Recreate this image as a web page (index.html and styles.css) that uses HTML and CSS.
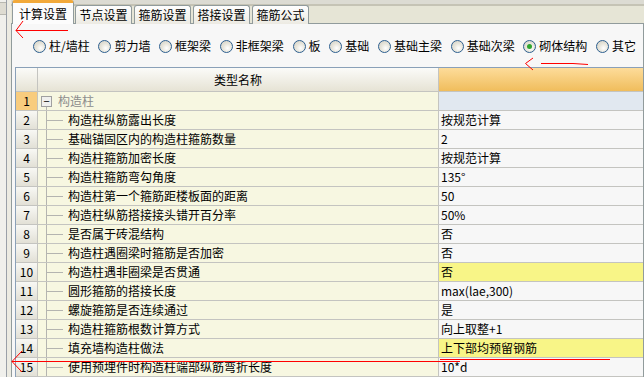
FILE: index.html
```html
<!DOCTYPE html>
<html lang="zh">
<head>
    <meta charset="UTF-8">
    <title>计算设置</title>
    <link rel="stylesheet" href="styles.css">
</head>
<body>
<div class="window">
    <div class="side">
        <div class="side-box"></div>
    </div>
    <div class="tab-control">
        <div class="tab-strip">
            <div class="tab active">计算设置</div>
            <div class="tab">节点设置</div>
            <div class="tab">箍筋设置</div>
            <div class="tab">搭接设置</div>
            <div class="tab">箍筋公式</div>
        </div>
        <div class="tab-page">
            <div class="radios">
                <label class="radio"><span class="dot"></span>柱/墙柱</label>
                <label class="radio"><span class="dot"></span>剪力墙</label>
                <label class="radio"><span class="dot"></span>框架梁</label>
                <label class="radio"><span class="dot"></span>非框架梁</label>
                <label class="radio"><span class="dot"></span>板</label>
                <label class="radio"><span class="dot"></span>基础</label>
                <label class="radio"><span class="dot"></span>基础主梁</label>
                <label class="radio"><span class="dot"></span>基础次梁</label>
                <label class="radio checked"><span class="dot"></span>砌体结构</label>
                <label class="radio"><span class="dot"></span>其它</label>
            </div>
            <div class="grid">
                <div class="row head">
                    <div class="cell num"></div>
                    <div class="cell name">类型名称</div>
                    <div class="cell value"></div>
                </div>
                <div class="row group">
                    <div class="cell num">1</div>
                    <div class="cell name"><span class="fold">−</span>构造柱</div>
                    <div class="cell value"></div>
                </div>
                <div class="row">
                    <div class="cell num">2</div>
                    <div class="cell name">构造柱纵筋露出长度</div>
                    <div class="cell value">按规范计算</div>
                </div>
                <div class="row">
                    <div class="cell num">3</div>
                    <div class="cell name">基础锚固区内的构造柱箍筋数量</div>
                    <div class="cell value">2</div>
                </div>
                <div class="row">
                    <div class="cell num">4</div>
                    <div class="cell name">构造柱箍筋加密长度</div>
                    <div class="cell value">按规范计算</div>
                </div>
                <div class="row">
                    <div class="cell num">5</div>
                    <div class="cell name">构造柱箍筋弯勾角度</div>
                    <div class="cell value">135°</div>
                </div>
                <div class="row">
                    <div class="cell num">6</div>
                    <div class="cell name">构造柱第一个箍筋距楼板面的距离</div>
                    <div class="cell value">50</div>
                </div>
                <div class="row">
                    <div class="cell num">7</div>
                    <div class="cell name">构造柱纵筋搭接接头错开百分率</div>
                    <div class="cell value">50%</div>
                </div>
                <div class="row">
                    <div class="cell num">8</div>
                    <div class="cell name">是否属于砖混结构</div>
                    <div class="cell value">否</div>
                </div>
                <div class="row">
                    <div class="cell num">9</div>
                    <div class="cell name">构造柱遇圈梁时箍筋是否加密</div>
                    <div class="cell value">否</div>
                </div>
                <div class="row">
                    <div class="cell num">10</div>
                    <div class="cell name">构造柱遇非圈梁是否贯通</div>
                    <div class="cell value changed">否</div>
                </div>
                <div class="row">
                    <div class="cell num">11</div>
                    <div class="cell name">圆形箍筋的搭接长度</div>
                    <div class="cell value">max(lae,300)</div>
                </div>
                <div class="row">
                    <div class="cell num">12</div>
                    <div class="cell name">螺旋箍筋是否连续通过</div>
                    <div class="cell value">是</div>
                </div>
                <div class="row">
                    <div class="cell num">13</div>
                    <div class="cell name">构造柱箍筋根数计算方式</div>
                    <div class="cell value">向上取整+1</div>
                </div>
                <div class="row">
                    <div class="cell num">14</div>
                    <div class="cell name">填充墙构造柱做法</div>
                    <div class="cell value changed">上下部均预留钢筋</div>
                </div>
                <div class="row">
                    <div class="cell num">15</div>
                    <div class="cell name">使用预埋件时构造柱端部纵筋弯折长度</div>
                    <div class="cell value">10*d</div>
                </div>
            </div>
        </div>
    </div>
    <!-- red marks drawn over the screenshot -->
    <svg class="marks" width="644" height="377" viewBox="0 0 644 377">
        <g fill="none" stroke="#ff0000" stroke-width="1">
            <path d="M23 21 L16 30.5 L23 38"/>
            <path d="M16 30.5 H68"/>
            <path d="M533 58 L525.5 63.5 L533 70"/>
            <path d="M541 63.5 H573 L588 64.5"/>
            <path d="M22 351 L12 361.5 L22 372"/>
            <path d="M12 361.5 H460"/>
            <path d="M440 359.5 H610"/>
        </g>
    </svg>
</div>
</body>
</html>
```

FILE: styles.css
```css
body {
    margin: 0;
    background: #ece9d8;
    font-family: "Noto Sans CJK SC", "Liberation Sans", sans-serif;
    font-size: 12px;
    color: #000;
}

.window {
    position: relative;
    width: 644px;
    height: 377px;
    overflow: hidden;
    display: flex;
    background: #f4f4f0;
}

.side {
    width: 11px;
    flex: none;
    background: linear-gradient(to right, #f0f0ec 0 6px, #9aa0a8 6px 7px, #ecebe2 7px);
}

.side-box {
    margin-top: 2px;
    height: 11px;
    width: 6px;
    border-top: 1px solid #b8b8b0;
    border-bottom: 1px solid #b8b8b0;
    background: #dedcd2;
}

.tab-control {
    flex: 1;
    display: flex;
    flex-direction: column;
}

.tab-strip {
    height: 27px;
    box-sizing: border-box;
    display: flex;
    align-items: flex-end;
    gap: 2px;
    padding-left: 1px;
    border-bottom: 1px solid #919b9c;
    background: linear-gradient(#dcdbd3 0 4px, #c5c3b5 4px 6px, #e6e5d6 6px);
}

.tab {
    height: 19px;
    width: 57px;
    box-sizing: border-box;
    margin-bottom: -1px;
    border: 1px solid #919b9c;
    border-bottom: none;
    border-radius: 3px 3px 0 0;
    background: linear-gradient(#fefefe, #eceae2);
    text-align: center;
    line-height: 18px;
}

.tab.active {
    height: 24px;
    width: 62px;
    margin-right: -1px;
    border-top: 3px solid #f2a93a;
    background: #fcfcfc;
    line-height: 21px;
}

.tab-page {
    flex: 1;
    background: #f7f7f7;
    border-left: 1px solid #919b9c;
    border-right: 1px solid #919b9c;
    padding-left: 3px;
}

.radios {
    height: 43px;
    display: flex;
    align-items: center;
    gap: 8.7px;
    padding-left: 18px;
    padding-top: 1px;
    box-sizing: border-box;
}

.radio {
    display: flex;
    align-items: center;
    gap: 3px;
    line-height: 14px;
}

.dot {
    width: 11px;
    height: 11px;
    border: 1px solid #2d5f8f;
    border-radius: 50%;
    background: radial-gradient(circle at 60% 65%, #ffffff 0, #e8e6dc 45%, #cfcdc2 100%);
    position: relative;
}

.radio.checked .dot::after {
    content: "";
    position: absolute;
    left: 3px;
    top: 3px;
    width: 5px;
    height: 5px;
    border-radius: 50%;
    background: #2fa52f;
}

.grid {
    border-top: 1px solid #8aa0b8;
    border-left: 1px solid #8aa0b8;
}

.row {
    display: grid;
    grid-template-columns: 22px 401px 1fr;
    height: 19px;
    box-sizing: border-box;
    border-bottom: 1px solid #c4c4c0;
}

.cell {
    border-right: 1px solid #c4c4c0;
    line-height: 18px;
    white-space: nowrap;
    overflow: hidden;
}

.cell:last-child {
    border-right: none;
}

.num {
    text-align: center;
    background: linear-gradient(#f8f8f4, #e2e0d6);
}

.name {
    position: relative;
    padding-left: 30px;
    background: #f7f7e1;
}

.value {
    padding-left: 2px;
    background: #f7f7f7;
}

.value.changed {
    background: #f8f587;
}

/* tree lines for child rows */
.row:not(.head):not(.group) .name::before {
    content: "";
    position: absolute;
    left: 8px;
    top: 0;
    bottom: -1px;
    border-left: 1px solid #b4b4b0;
}

.row:not(.head):not(.group) .name::after {
    content: "";
    position: absolute;
    left: 8px;
    top: 9px;
    width: 17px;
    border-top: 1px solid #b4b4b0;
}

.head {
    height: 24px;
}

.head .cell {
    line-height: 23px;
    background: linear-gradient(#fbfbf8, #e6e3d5);
}

.head .name {
    padding-left: 0;
    text-align: center;
}

.head .value {
    background: linear-gradient(#fddc9a, #f0bd5c);
}

.group .num {
    background: #f8cc7e;
}

.group .name {
    padding-left: 20px;
    color: #8c8c8c;
}

.group .value {
    background: #e1e8f0;
}

.fold {
    position: absolute;
    left: 3px;
    top: 4px;
    width: 9px;
    height: 9px;
    border: 1px solid #a0a0a0;
    background: #f0f0ee;
    color: #000;
    line-height: 9px;
    text-align: center;
    font-size: 11px;
}

.group .name::after {
    content: "";
    position: absolute;
    left: 8px;
    top: 15px;
    bottom: -1px;
    border-left: 1px solid #b4b4b0;
}

.marks {
    position: absolute;
    left: 0;
    top: 0;
    pointer-events: none;
}
```
